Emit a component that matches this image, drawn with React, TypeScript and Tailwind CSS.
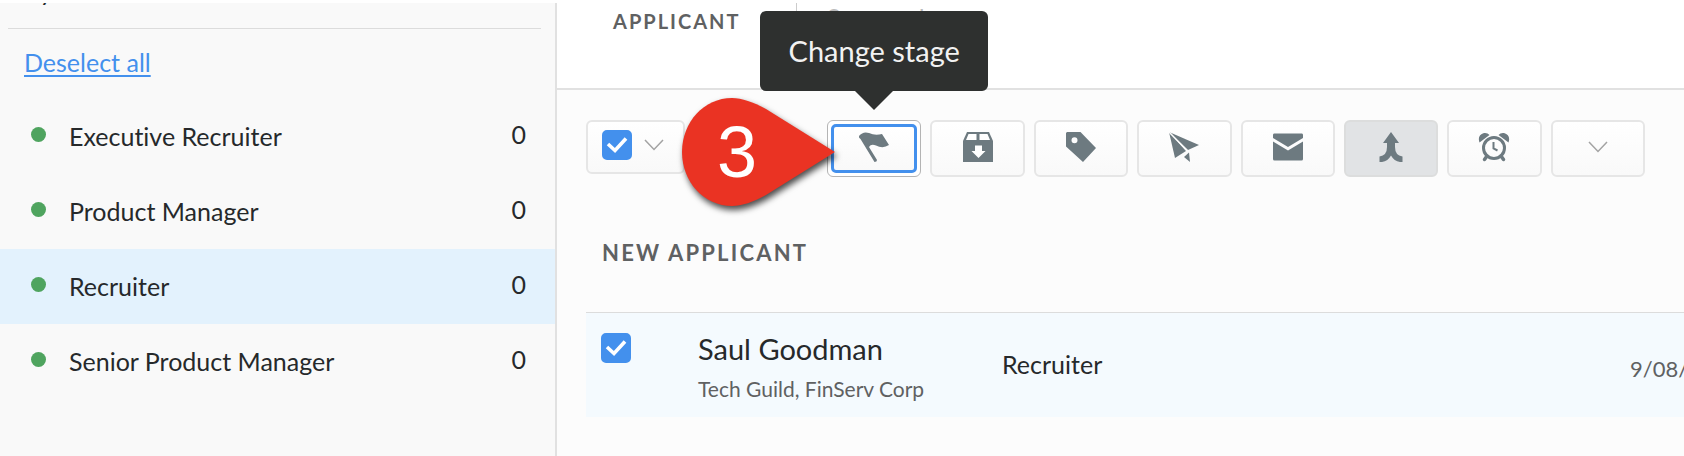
import type { ReactNode } from 'react';

const jobs = [
  { name: 'Executive Recruiter', count: 0, active: false },
  { name: 'Product Manager', count: 0, active: false },
  { name: 'Recruiter', count: 0, active: true },
  { name: 'Senior Product Manager', count: 0, active: false },
];

export default function App() {
  return (
    <div className="flex min-h-screen overflow-hidden border-t-[3px] border-white bg-[#fcfcfc] font-['Lato','Noto_Sans',sans-serif] text-[#26292b] [font-variant-ligatures:none]">
      <Sidebar />
      <main className="min-w-0 flex-1">
        <Header />
        <Toolbar />
        <Applicants />
      </main>
    </div>
  );
}

function Sidebar() {
  return (
    <aside className="w-[557px] max-w-1/2 shrink-0 border-r-2 border-[#e1e1e1] bg-[#f9f9f9]">
      {/* Group title, scrolled almost out of view */}
      <div className="ml-2 mr-3.5 flex h-[26px] items-start overflow-hidden border-b border-[#dcdcdc] pl-4">
        <h2 className="-mt-7 text-[25px] leading-8">By</h2>
      </div>
      <div className="px-6 pt-4 pb-5">
        <a href="#" className="block w-fit text-[25px] leading-[34px] text-[#4390ed] underline decoration-2 underline-offset-3">
          Deselect all
        </a>
      </div>
      <ul>
        {jobs.map((job) => (
          <li key={job.name}>
            <button
              type="button"
              className={`flex h-[75px] w-full items-center pl-[31px] pr-[29px] text-left text-[25px] ${job.active ? 'bg-[#e3f2fd]' : ''}`}
            >
              <span className="mb-1 size-[15px] shrink-0 rounded-full bg-[#4fa45f]" />
              <span className="ml-[23px] flex-1">{job.name}</span>
              <span className="mb-1">{job.count}</span>
            </button>
          </li>
        ))}
      </ul>
    </aside>
  );
}

function Header() {
  return (
    <header className="flex h-[87px] items-start border-b-2 border-[#e1e1e1] bg-white pl-14">
      <h2 className="w-[183px] pt-1 text-xl leading-7 font-bold tracking-widest text-[#5f6162]">APPLICANT</h2>
      <div className="h-8 border-l border-[#ccc] pl-[30px] text-2xl leading-7 text-[#bbb]">Screened</div>
    </header>
  );
}

function Toolbar() {
  return (
    <div className="flex items-start pt-[30px] pr-[39px] pl-[29px]">
      <div className="relative mr-[142px] flex h-[54px] w-[99px] shrink-0 items-center justify-between rounded-md border-2 border-[#e6e6e6] bg-linear-to-b from-white to-[#f9f9f9] pr-[19px] pb-1 pl-3.5">
        <CheckBox label="Select all applicants" />
        <button type="button" aria-label="Selection options">
          <Chevron />
        </button>
        <StepMarker />
      </div>
      <div className="grid flex-1 grid-cols-8 gap-[9px]">
        <div className="relative">
          <Tooltip />
          <button
            type="button"
            aria-label="Change stage"
            className="block h-[57px] w-full rounded-md border border-[#b4b4b4] bg-white p-[3px]"
          >
            <span className="flex h-full items-center justify-center rounded-[5px] border-[3px] border-[#4390ed] bg-linear-to-b from-white to-[#f9f9f9] text-[#6d7a80]">
              <svg viewBox="0 0 32 32" className="mb-1 size-8" fill="currentColor">
                <path d="M1 5 Q5 0 11 2 Q17 5 24 3 L31 14 Q25 18 18 14.500 Q13 12.500 11 16 L19 29 Q19 31 16.500 31 L2.500 8 Q0.500 7 1 5 Z" />
              </svg>
            </span>
          </button>
        </div>
        <ToolButton label="Archive">
          <path d="M5 1 H27 L31 10 V31 H1 V10 Z" />
          <path fill="#fff" d="M6.500 3 H14.500 V9 H4 Z M17.500 3 H25.500 L28 9 H17.500 Z M13 14.500 H20 V20 H23.500 L16.500 27 L9.500 20 H13 Z" />
        </ToolButton>
        <ToolButton label="Add tag">
          <path fillRule="evenodd" d="M2 1 H15.500 L31 17 L18 31 L1 15.500 V2 Z M9.500 6.200 A3 3 0 1 0 9.500 12.200 A3 3 0 1 0 9.500 6.200 Z" />
        </ToolButton>
        <ToolButton label="Send">
          <path d="M1 1 L7 27 L18 20 Z" />
          <path d="M1 1 L31 14 L20 19 Z" />
          <path d="M1 1 L21 21.500" stroke="#fdfdfd" strokeWidth="1.500" />
          <path d="M16 26 L21 21.500 L22 31 Z" />
        </ToolButton>
        <ToolButton label="Send email">
          <path d="M2 2.500 H30 Q31 2.500 31 4 V7 L16 16 L1 7 V4 Q1 2.500 2 2.500 Z M1 10.500 L16 19.500 L31 10.500 V28 Q31 29.500 29.500 29.500 H2.500 Q1 29.500 1 28 Z" />
        </ToolButton>
        <ToolButton label="Merge" pressed>
          <path d="M16 1 L24 12 H20 V16 Q20 24.500 27.500 25.500 V31 H25 Q19 30 16 24.500 Q13 30 7 31 H4.500 V25.500 Q12 24.500 12 16 V12 H8 Z" />
        </ToolButton>
        <ToolButton label="Set reminder">
          <circle cx="16" cy="17" r="10.500" fill="none" stroke="currentColor" strokeWidth="3" />
          <path d="M1.500 11.500 Q-1 4 6 2 Q9.500 1.500 11.500 4 Z M30.500 11.500 Q33 4 26 2 Q22.500 1.500 20.500 4 Z" />
          <path d="M9 25 L6.500 28.500 M23 25 L25.500 28.500" stroke="currentColor" strokeWidth="3.500" strokeLinecap="round" />
          <path d="M15.500 11 V17.500 L19.500 19.500" fill="none" stroke="currentColor" strokeWidth="2" />
        </ToolButton>
        <button
          type="button"
          aria-label="More actions"
          className="flex h-[57px] items-center justify-center rounded-md border-2 border-[#e6e6e6] bg-linear-to-b from-white to-[#f9f9f9] pb-1"
        >
          <Chevron />
        </button>
      </div>
    </div>
  );
}

function ToolButton({ label, pressed = false, children }: { label: string; pressed?: boolean; children: ReactNode }) {
  const look = pressed ? 'border-[#dcdddd] bg-[#e1e3e5]' : 'border-[#e6e6e6] bg-linear-to-b from-white to-[#f9f9f9]';
  return (
    <button type="button" aria-label={label} className={`flex h-[57px] items-center justify-center rounded-md border-2 pb-1 text-[#6d7a80] ${look}`}>
      <svg viewBox="0 0 32 32" className="size-8" fill="currentColor">
        {children}
      </svg>
    </button>
  );
}

function Chevron() {
  return (
    <svg viewBox="0 0 20 12" className="h-3 w-5" fill="none" stroke="#a3a3a3" strokeWidth="1.500">
      <path d="M1 1 L10 10.500 L19 1" />
    </svg>
  );
}

function CheckBox({ label }: { label: string }) {
  return (
    <label className="relative block size-[30px] shrink-0">
      <input type="checkbox" defaultChecked aria-label={label} className="peer block size-full appearance-none rounded-[5px] border-2 border-[#ccc] bg-white checked:border-[#4390ed] checked:bg-[#4390ed]" />
      <svg viewBox="0 0 30 30" className="pointer-events-none absolute inset-0 hidden peer-checked:block" fill="none" stroke="#fff" strokeWidth="3.600">
        <path d="M6 14 L13 20.500 L24 8.500" />
      </svg>
    </label>
  );
}

function Tooltip() {
  return (
    <div role="tooltip" className="absolute bottom-[86px] left-1/2 z-20 flex h-20 w-[228px] -translate-x-1/2 items-center justify-center rounded-md bg-[#2e302f] text-[29px] text-[#f2f2f2]">
      Change stage
      <svg viewBox="0 0 38 19" className="absolute top-full left-1/2 h-[19px] w-[38px] -translate-x-1/2" fill="#2e302f">
        <path d="M0 0 H38 L19 19 Z" />
      </svg>
    </div>
  );
}

function StepMarker() {
  return (
    <div className="pointer-events-none absolute top-[-24px] left-[94px] z-10 h-[108px] w-[153px]">
      <svg viewBox="0 0 153 108" className="absolute inset-0 size-full overflow-visible drop-shadow-[2px_4px_3px_rgba(0,0,0,0.7)]" fill="#ea3323">
        <path d="M50 0 C22 0 0 24 0 54 C0 84 22 108 50 108 C60 108 71 104 84 97 L153 54 L84 11 C71 4 60 0 50 0 Z" />
      </svg>
      <span className="relative flex h-full w-[110px] items-center justify-center font-['Liberation_Sans',sans-serif] text-7xl text-white">3</span>
    </div>
  );
}

function Applicants() {
  return (
    <section className="pt-[60px] pl-[29px]">
      <h2 className="pl-4 text-[22px] leading-8 font-bold tracking-widest text-[#5f6162]">NEW APPLICANT</h2>
      <table className="mt-[43px] w-full table-fixed border-t border-[#dcdcdc] bg-[#f4fafe] text-left">
        <tbody>
          <tr className="h-[104px]">
            <td className="w-28 pt-5 pl-[15px] align-top">
              <CheckBox label="Select Saul Goodman" />
            </td>
            <td className="w-[304px] pt-4 align-top">
              <div className="text-[29px] leading-10">Saul Goodman</div>
              <div className="pt-1 text-[21px] leading-8 text-[#5f6162]">Tech Guild, FinServ Corp</div>
            </td>
            <td className="text-[25px]">Recruiter</td>
            <td className="w-[54px] overflow-hidden pt-2 text-[22px] whitespace-nowrap text-[#5f6162]">9/08/21</td>
          </tr>
        </tbody>
      </table>
    </section>
  );
}
